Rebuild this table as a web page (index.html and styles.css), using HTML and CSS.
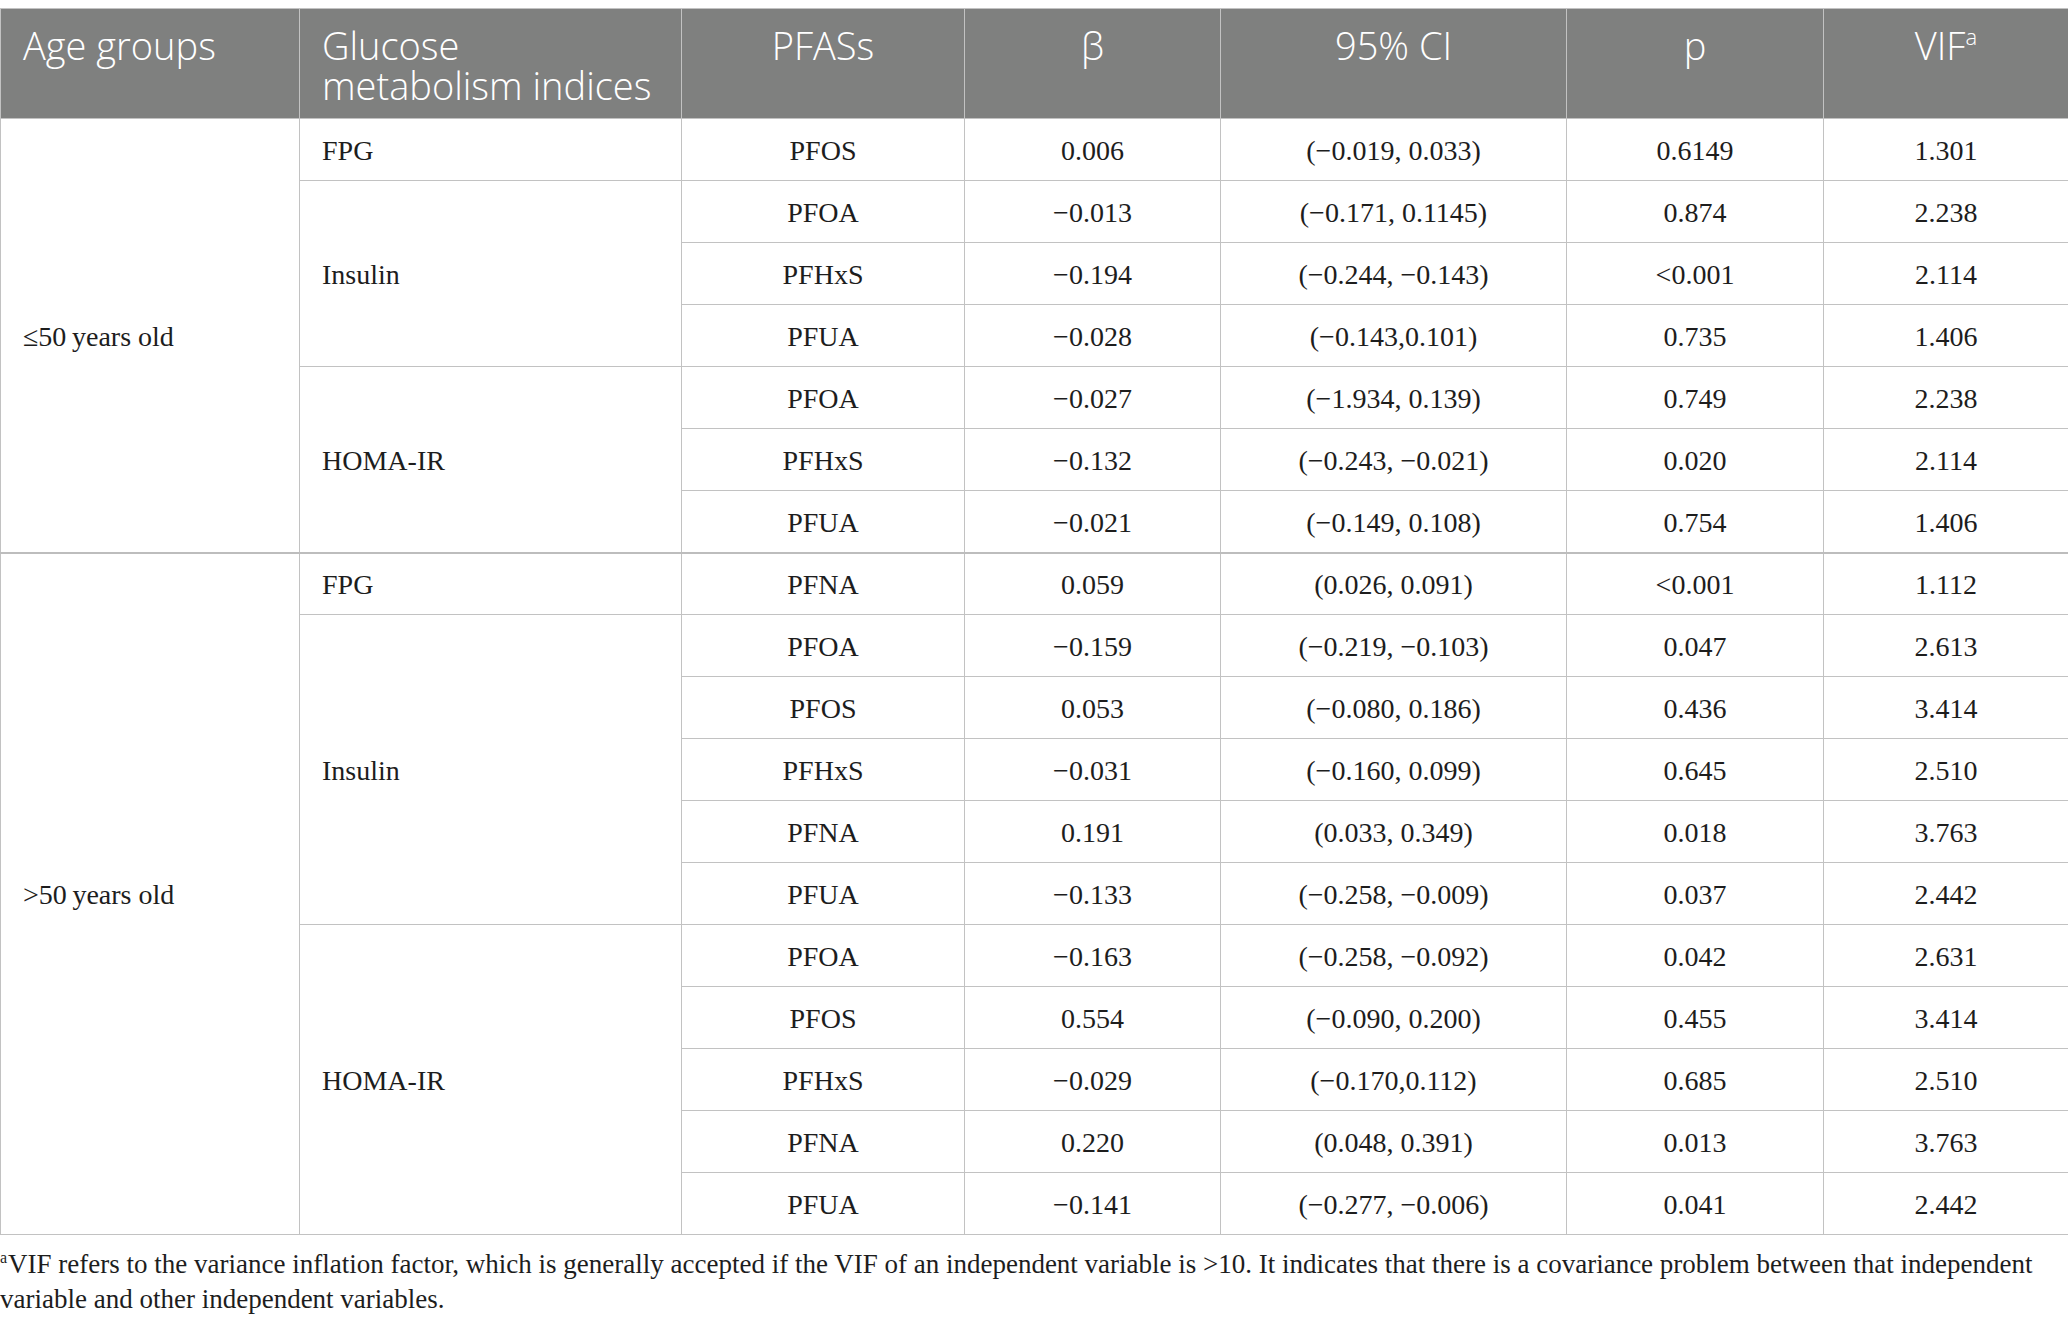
FILE: index.html
```html
<!DOCTYPE html>
<html lang="en">
<head>
<meta charset="utf-8">
<title>PFAS and glucose metabolism by age group</title>
<link rel="stylesheet" href="styles.css">
</head>
<body>
<div class="page">
<table class="data">
  <colgroup>
    <col class="c1"><col class="c2"><col class="c3"><col class="c4"><col class="c5"><col class="c6"><col class="c7">
  </colgroup>
  <thead>
    <tr>
      <th class="left">Age groups</th>
      <th class="left">Glucose metabolism indices</th>
      <th>PFASs</th>
      <th>β</th>
      <th>95% CI</th>
      <th>p</th>
      <th>VIF<sup>a</sup></th>
    </tr>
  </thead>
  <tbody>
    <tr>
      <td class="left" rowspan="7">≤50&#8201;years old</td>
      <td class="left">FPG</td>
      <td>PFOS</td><td>0.006</td><td>(−0.019, 0.033)</td><td>0.6149</td><td>1.301</td>
    </tr>
    <tr>
      <td class="left" rowspan="3">Insulin</td>
      <td>PFOA</td><td>−0.013</td><td>(−0.171, 0.1145)</td><td>0.874</td><td>2.238</td>
    </tr>
    <tr><td>PFHxS</td><td>−0.194</td><td>(−0.244, −0.143)</td><td>&lt;0.001</td><td>2.114</td></tr>
    <tr><td>PFUA</td><td>−0.028</td><td>(−0.143,0.101)</td><td>0.735</td><td>1.406</td></tr>
    <tr>
      <td class="left" rowspan="3">HOMA-IR</td>
      <td>PFOA</td><td>−0.027</td><td>(−1.934, 0.139)</td><td>0.749</td><td>2.238</td>
    </tr>
    <tr><td>PFHxS</td><td>−0.132</td><td>(−0.243, −0.021)</td><td>0.020</td><td>2.114</td></tr>
    <tr><td>PFUA</td><td>−0.021</td><td>(−0.149, 0.108)</td><td>0.754</td><td>1.406</td></tr>
    <tr class="grp">
      <td class="left" rowspan="11">&gt;50&#8201;years old</td>
      <td class="left">FPG</td>
      <td>PFNA</td><td>0.059</td><td>(0.026, 0.091)</td><td>&lt;0.001</td><td>1.112</td>
    </tr>
    <tr>
      <td class="left" rowspan="5">Insulin</td>
      <td>PFOA</td><td>−0.159</td><td>(−0.219, −0.103)</td><td>0.047</td><td>2.613</td>
    </tr>
    <tr><td>PFOS</td><td>0.053</td><td>(−0.080, 0.186)</td><td>0.436</td><td>3.414</td></tr>
    <tr><td>PFHxS</td><td>−0.031</td><td>(−0.160, 0.099)</td><td>0.645</td><td>2.510</td></tr>
    <tr><td>PFNA</td><td>0.191</td><td>(0.033, 0.349)</td><td>0.018</td><td>3.763</td></tr>
    <tr><td>PFUA</td><td>−0.133</td><td>(−0.258, −0.009)</td><td>0.037</td><td>2.442</td></tr>
    <tr>
      <td class="left" rowspan="5">HOMA-IR</td>
      <td>PFOA</td><td>−0.163</td><td>(−0.258, −0.092)</td><td>0.042</td><td>2.631</td>
    </tr>
    <tr><td>PFOS</td><td>0.554</td><td>(−0.090, 0.200)</td><td>0.455</td><td>3.414</td></tr>
    <tr><td>PFHxS</td><td>−0.029</td><td>(−0.170,0.112)</td><td>0.685</td><td>2.510</td></tr>
    <tr><td>PFNA</td><td>0.220</td><td>(0.048, 0.391)</td><td>0.013</td><td>3.763</td></tr>
    <tr><td>PFUA</td><td>−0.141</td><td>(−0.277, −0.006)</td><td>0.041</td><td>2.442</td></tr>
  </tbody>
</table>
<p class="note"><sup>a</sup>VIF refers to the variance inflation factor, which is generally accepted if the VIF of an independent variable is &gt;10. It indicates that there is a covariance problem between that independent variable and other independent variables.</p>
</div>
</body>
</html>
```
FILE: styles.css
```css
html, body {
  margin: 0;
  padding: 0;
  background: #ffffff;
}

.page {
  padding-top: 8px;
  width: 2068px;
}

.data {
  width: 2068px;
  border-collapse: collapse;
  table-layout: fixed;
  font-family: "Liberation Serif", "Times New Roman", serif;
  font-size: 28px;
  color: #1d1d1d;
}

.c1 { width: 299px; }
.c2 { width: 382px; }
.c3 { width: 283px; }
.c4 { width: 256px; }
.c5 { width: 346px; }
.c6 { width: 257px; }
.c7 { width: 245px; }

.data th,
.data td {
  border: 1px solid #c2c2c2;
  text-align: center;
  padding: 0 22px;
}

.data thead tr {
  height: 110px;
}

.data th {
  background: #7f807f;
  color: #ffffff;
  font-family: "Open Sans", "Noto Sans", sans-serif;
  font-weight: 300;
  font-size: 38px;
  line-height: 40px;
  vertical-align: top;
  padding-top: 16px;
  padding-bottom: 8px;
}

.data th sup {
  font-size: 22px;
  line-height: 0;
  vertical-align: 15px;
}

.data tbody tr {
  height: 62px;
}

.data td {
  vertical-align: middle;
  line-height: 32px;
  padding-top: 3px;
  padding-bottom: 0;
}

.data .left {
  text-align: left;
}

.data tr.grp td {
  border-top: 2px solid #bdbdbd;
}

.note {
  margin: 12px 0 0 0;
  font-family: "Liberation Serif", "Times New Roman", serif;
  font-size: 27px;
  line-height: 35px;
  color: #1d1d1d;
}

.note sup {
  font-size: 16px;
  line-height: 0;
  vertical-align: 10px;
  margin-right: 1px;
}
```
